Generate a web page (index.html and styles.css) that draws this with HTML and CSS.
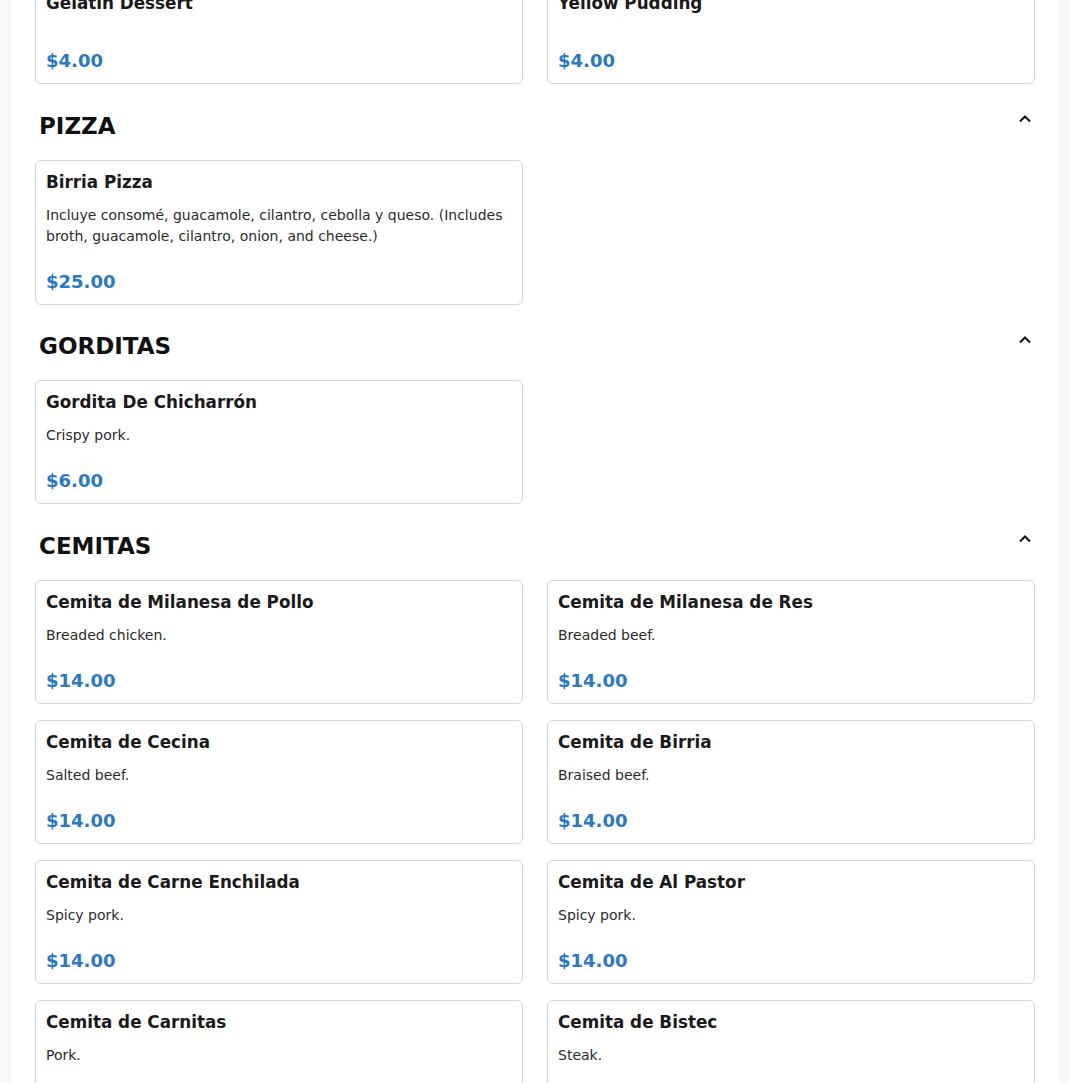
FILE: index.html
```html
<!DOCTYPE html>
<html lang="en">
<head>
<meta charset="utf-8">
<title>Menu</title>
<link rel="stylesheet" href="styles.css">
</head>
<body>
<div class="page">
  <section class="section section-first">
    <div class="grid">
      <div class="card"><div class="title">Gelatin Dessert</div><div class="desc"></div><div class="price">$4.00</div></div>
      <div class="card"><div class="title">Yellow Pudding</div><div class="desc"></div><div class="price">$4.00</div></div>
    </div>
  </section>

  <section class="section">
    <div class="section-header">
      <h2>PIZZA</h2>
      <svg class="chev" width="14" height="9" viewBox="0 0 14 9"><polyline points="2,7.5 7,2.5 12,7.5" fill="none" stroke="#111" stroke-width="2"/></svg>
    </div>
    <div class="grid">
      <div class="card"><div class="title">Birria Pizza</div><div class="desc">Incluye consomé, guacamole, cilantro, cebolla y queso. (Includes broth, guacamole, cilantro, onion, and cheese.)</div><div class="price">$25.00</div></div>
    </div>
  </section>

  <section class="section">
    <div class="section-header">
      <h2>GORDITAS</h2>
      <svg class="chev" width="14" height="9" viewBox="0 0 14 9"><polyline points="2,7.5 7,2.5 12,7.5" fill="none" stroke="#111" stroke-width="2"/></svg>
    </div>
    <div class="grid">
      <div class="card"><div class="title">Gordita De Chicharrón</div><div class="desc">Crispy pork.</div><div class="price">$6.00</div></div>
    </div>
  </section>

  <section class="section">
    <div class="section-header">
      <h2>CEMITAS</h2>
      <svg class="chev" width="14" height="9" viewBox="0 0 14 9"><polyline points="2,7.5 7,2.5 12,7.5" fill="none" stroke="#111" stroke-width="2"/></svg>
    </div>
    <div class="grid">
      <div class="card"><div class="title">Cemita de Milanesa de Pollo</div><div class="desc">Breaded chicken.</div><div class="price">$14.00</div></div>
      <div class="card"><div class="title">Cemita de Milanesa de Res</div><div class="desc">Breaded beef.</div><div class="price">$14.00</div></div>
      <div class="card"><div class="title">Cemita de Cecina</div><div class="desc">Salted beef.</div><div class="price">$14.00</div></div>
      <div class="card"><div class="title">Cemita de Birria</div><div class="desc">Braised beef.</div><div class="price">$14.00</div></div>
      <div class="card"><div class="title">Cemita de Carne Enchilada</div><div class="desc">Spicy pork.</div><div class="price">$14.00</div></div>
      <div class="card"><div class="title">Cemita de Al Pastor</div><div class="desc">Spicy pork.</div><div class="price">$14.00</div></div>
      <div class="card"><div class="title">Cemita de Carnitas</div><div class="desc">Pork.</div><div class="price">$14.00</div></div>
      <div class="card"><div class="title">Cemita de Bistec</div><div class="desc">Steak.</div><div class="price">$14.00</div></div>
    </div>
  </section>
</div>
</body>
</html>
```
FILE: styles.css
```css
html, body {
  margin: 0;
  padding: 0;
  background: #f8f8f8;
  font-family: "DejaVu Sans", sans-serif;
  overflow: hidden;
}
.page {
  width: 1048px;
  margin: 0 auto;
  background: #fff;
  padding: 0 24px 40px 24px;
  box-sizing: border-box;
  min-height: 1200px;
}
.section-first {
  margin-top: -19px;
}
.section-header {
  display: flex;
  justify-content: space-between;
  align-items: flex-start;
  padding: 26.5px 3px 0 4px;
  margin-bottom: 19px;
}
.section-header h2 {
  margin: 0;
  font-size: 23px;
  line-height: 30px;
  font-weight: bold;
  color: #111;
}
.chev {
  margin-top: 3.5px;
}
.grid {
  display: grid;
  grid-template-columns: 1fr 1fr;
  column-gap: 24px;
  row-gap: 16px;
}
.card {
  border: 1px solid #d6d6d6;
  border-radius: 6px;
  padding: 11px 10px 10px 10px;
  display: flex;
  flex-direction: column;
  background: #fff;
}
.title {
  font-size: 16.8px;
  font-weight: bold;
  line-height: 20px;
  color: #1a1a1a;
}
.desc {
  margin-top: 13px;
  font-size: 14px;
  line-height: 21px;
  color: #2b2b2b;
}
.price {
  margin-top: auto;
  padding-top: 23px;
  font-size: 18px;
  font-weight: bold;
  line-height: 24px;
  color: #2a78c6;
}
```
